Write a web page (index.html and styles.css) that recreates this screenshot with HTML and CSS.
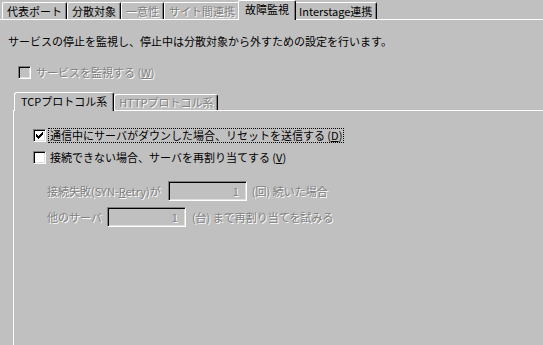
FILE: index.html
```html
<!DOCTYPE html>
<html lang="ja">
<head>
<meta charset="utf-8">
<title>故障監視</title>
<link rel="stylesheet" href="styles.css">
</head>
<body>
<div class="tabbar">
  <div class="tab">代表ポート</div>
  <div class="tab">分散対象</div>
  <div class="tab disabled">一意性</div>
  <div class="tab disabled">サイト間連携</div>
  <div class="tab selected">故障監視</div>
  <div class="tab">Interstage連携</div>
</div>
<div class="page">
  <p class="desc">サービスの停止を監視し、停止中は分散対象から外すための設定を行います。</p>
  <div class="check-row top disabled">
    <span class="box"></span>
    <span class="label">サービスを監視する (<u>W</u>)</span>
  </div>
  <div class="subtabs">
    <div class="subtab selected">TCPプロトコル系</div>
    <div class="subtab disabled">HTTPプロトコル系</div>
  </div>
  <div class="panel">
    <div class="check-row first">
      <span class="box checked">
        <svg width="7" height="7" viewBox="0 0 7 7" shape-rendering="crispEdges"><path d="M0 2h1v3H0z M1 3h1v3H1z M2 4h1v3H2z M3 3h1v3H3z M4 2h1v3H4z M5 1h1v3H5z M6 0h1v3H6z" fill="#000"/></svg>
      </span>
      <span class="label focus">通信中にサーバがダウンした場合、リセットを送信する (<u>D</u>)</span>
    </div>
    <div class="check-row second">
      <span class="box"></span>
      <span class="label">接続できない場合、サーバを再割り当てする (<u>V</u>)</span>
    </div>
    <div class="field-row retry disabled">
      <span class="flabel lead">接続失敗(SYN-<u>R</u>etry)が</span>
      <span class="input">1</span>
      <span class="flabel">(回) 続いた場合</span>
    </div>
    <div class="field-row servers disabled">
      <span class="flabel">他のサーバ</span>
      <span class="input">1</span>
      <span class="flabel after">(台) まで再割り当てを試みる</span>
    </div>
  </div>
</div>
</body>
</html>
```
FILE: styles.css
```css
html, body {
  margin: 0;
  height: 100%;
  overflow: hidden;
}
body {
  background: #c0c0c0;
  color: #000;
  font-family: "Noto Sans CJK JP", "Noto Sans", sans-serif;
  font-size: 11px;
  line-height: 13px;
  display: flex;
  flex-direction: column;
}

/* top tab bar */
.tabbar {
  display: flex;
  align-items: flex-end;
  height: 20px;
  padding-left: 2px;
  background: linear-gradient(#fff, #fff) left bottom / 100% 1px no-repeat;
  flex: none;
}
.tab {
  box-sizing: border-box;
  height: 17px;
  margin-bottom: 1px;
  padding: 0 4px;
  border-left: 1px solid #fff;
  border-top: 1px solid #fff;
  border-right: 1px solid #000;
  box-shadow: inset -1px 0 #808080;
  border-radius: 2px 2px 0 0;
  line-height: 16px;
  white-space: nowrap;
}
.tab.selected {
  height: 20px;
  margin: 0 -2px;
  padding: 0 6px 2px;
  line-height: 17px;
  background: #c0c0c0;
  z-index: 1;
}
.disabled .label, .disabled .flabel, .tab.disabled, .subtab.disabled, .disabled .input {
  color: #808080;
  text-shadow: 1px 1px 0 #fff;
}

.page {
  flex: 1;
  display: flex;
  flex-direction: column;
}
.desc {
  margin: 15px 0 0 8px;
}

/* checkboxes */
.check-row {
  display: flex;
  align-items: center;
  white-space: nowrap;
}
.check-row.top {
  margin: 17px 0 0 18px;
  gap: 3px;
}
.box {
  box-sizing: border-box;
  width: 13px;
  height: 13px;
  flex: none;
  background: #fff;
  border: 1px solid;
  border-color: #808080 #fff #fff #808080;
  box-shadow: inset 1px 1px #000, inset -1px -1px #dfdfdf;
  display: flex;
  padding: 2px 0 0 2px;
}
.disabled .box {
  background: #c0c0c0;
}
.label {
  padding: 0 1px;
  border: 1px dotted transparent;
}
.label.focus {
  border-color: #000;
}

/* sub tabs */
.subtabs {
  display: flex;
  align-items: flex-end;
  height: 19px;
  margin: 12px 0 0 13px;
  background: linear-gradient(#fff, #fff) left bottom / 100% 1px no-repeat;
  flex: none;
}
.subtab {
  box-sizing: border-box;
  height: 16px;
  margin-bottom: 1px;
  padding: 0 4px;
  border-left: 1px solid #fff;
  border-top: 1px solid #fff;
  border-right: 1px solid #000;
  box-shadow: inset -1px 0 #808080;
  border-radius: 3px 3px 0 0;
  line-height: 15px;
  white-space: nowrap;
}
.subtab.selected {
  height: 19px;
  margin: 0 0 0 1px;
  padding: 0 6px 1px;
  line-height: 17px;
  background: #c0c0c0;
  z-index: 1;
}

.panel {
  flex: 1;
  margin-left: 13px;
  border-left: 1px solid #fff;
  display: flex;
  flex-direction: column;
}
.check-row.first {
  margin: 17px 0 0 19px;
  gap: 2px;
}
.check-row.second {
  margin: 7px 0 0 19px;
  gap: 2px;
}

/* fields */
.field-row {
  display: flex;
  align-items: center;
  gap: 5px;
  margin-left: 33px;
  white-space: nowrap;
}
.field-row.retry { margin-top: 16px; }
.field-row.servers { margin-top: 6px; }
.flabel.lead { margin-right: 2px; }
.input {
  box-sizing: border-box;
  width: 79px;
  height: 20px;
  border: 1px solid;
  border-color: #808080 #fff #fff #808080;
  box-shadow: inset 1px 1px #000, inset -1px -1px #dfdfdf;
  text-align: right;
  padding: 2px 7px 0 0;
  line-height: 15px;
}
.flabel.after { margin-left: 1px; }
```
